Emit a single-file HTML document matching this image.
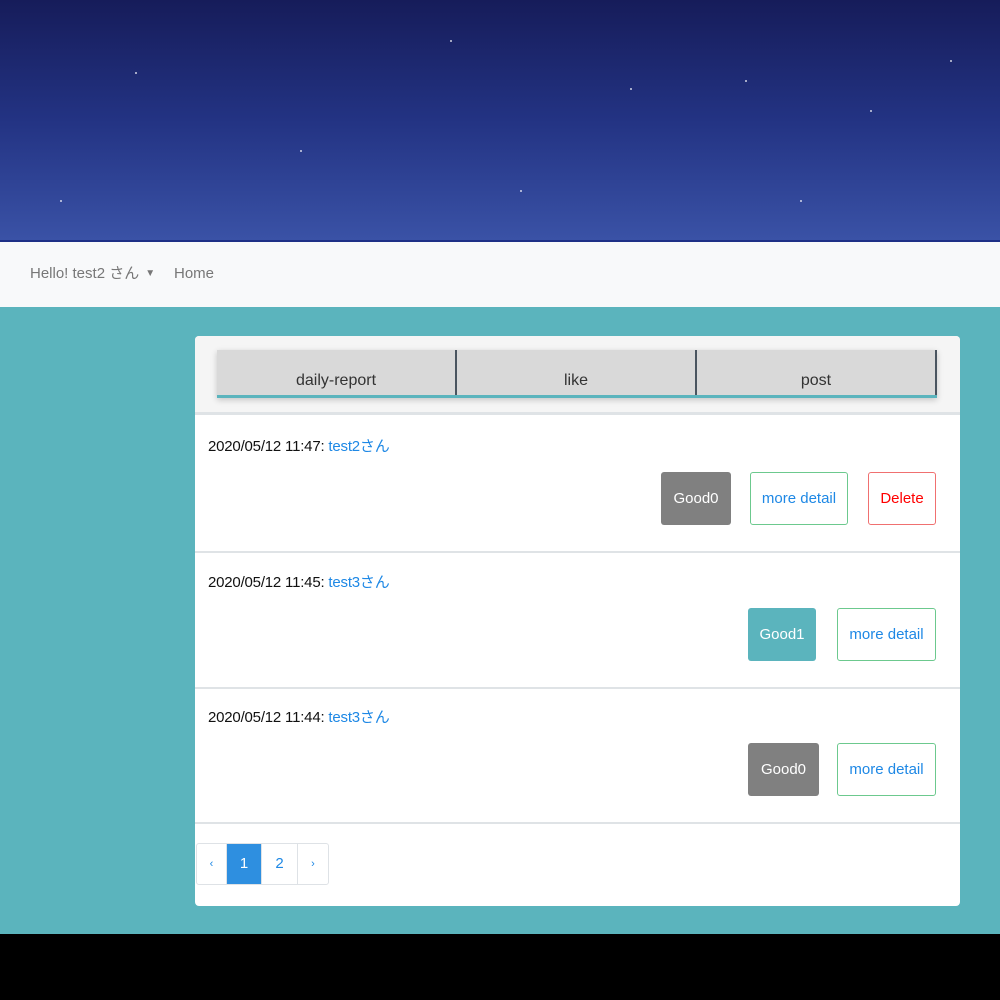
<!DOCTYPE html><html><head><meta charset="utf-8"><style>
*{box-sizing:border-box;margin:0;padding:0}
body{width:1000px;height:1000px;position:relative;background:#000;font-family:"Liberation Sans","Noto Sans CJK JP",sans-serif;overflow:hidden}
.hd{position:absolute;left:0;top:0;width:1000px;height:242px;background:linear-gradient(180deg,#161c5a 0%,#233383 50%,#3a52a6 100%);border-bottom:2px solid #1e2f86}
.nav{position:absolute;top:242px;left:0;width:1000px;height:65px;background:#f8f9fa;color:#777;font-size:15px}
.nav .i{position:absolute;top:23px;line-height:18px}
.nav .c{font-size:10px;margin-left:6px;vertical-align:2px}
.main{position:absolute;top:307px;left:0;width:1000px;height:627px;background:#5bb4bd}
.card{position:absolute;left:195px;top:336px;width:765px;height:570px;background:#fff;border-radius:4px;overflow:hidden}
.tabw{position:absolute;left:0;top:0;width:765px;height:79px;background:#f5f5f5;border-bottom:3px solid #dfe3e6}
.tabs{position:absolute;left:22px;top:14px;width:720px;height:48px;background:#d9d9d9;border-bottom:3px solid #5bb4bd;box-shadow:0 2px 6px rgba(0,0,0,.2);display:flex}
.tabs div{flex:1;text-align:center;padding-top:22px;font-size:16px;color:#333;border-right:2px solid #4a5560}
.row{position:absolute;left:0;width:765px;height:136px;border-bottom:2px solid #dfe3e6}
.t{position:absolute;left:13px;top:18px;font-size:15px;color:#111;letter-spacing:-.2px}
.t a{color:#1e88e5;text-decoration:none}
.b{position:absolute;top:55px;height:53px;border-radius:3px;font-size:15px;text-align:center;line-height:53px}
.g{background:#808080;color:#fff}.gt{background:#5bb4bd;color:#fff}
.md{border:1px solid #6cc98e;color:#1e88e5;background:#fff;line-height:51px}
.dl{border:1px solid #f07070;color:#f00;background:#fff;line-height:51px}
.pg{position:absolute;left:1px;top:507px;display:flex;height:42px;border:1px solid #dee2e6;border-radius:3px;overflow:hidden}
.pg div{width:30px;text-align:center;line-height:40px;color:#1e88e5;font-size:15px;border-right:1px solid #dee2e6}
.pg .a{background:#2e8fe0;color:#fff;width:35px}
.st{position:absolute;width:2px;height:2px;background:#fff;opacity:.6}
</style></head><body>
<div class="hd">
<div class="st" style="left:135px;top:72px"></div><div class="st" style="left:630px;top:88px"></div><div class="st" style="left:745px;top:80px"></div><div class="st" style="left:870px;top:110px"></div><div class="st" style="left:300px;top:150px"></div><div class="st" style="left:450px;top:40px"></div><div class="st" style="left:520px;top:190px"></div><div class="st" style="left:60px;top:200px"></div><div class="st" style="left:950px;top:60px"></div><div class="st" style="left:800px;top:200px"></div>
</div>
<div class="nav"><span class="i" style="left:30px">Hello! test2 さん<span class="c">▼</span></span><span class="i" style="left:174px">Home</span></div>
<div class="main"></div>
<div class="card">
<div class="tabw"><div class="tabs"><div>daily-report</div><div>like</div><div>post</div></div></div>
<div class="row" style="top:81px"><div class="t">2020/05/12 11:47: <a>test2さん</a></div>
<div class="b g" style="left:466px;width:70px">Good0</div><div class="b md" style="left:555px;width:98px">more detail</div><div class="b dl" style="left:673px;width:68px">Delete</div></div>
<div class="row" style="top:217px"><div class="t">2020/05/12 11:45: <a>test3さん</a></div>
<div class="b gt" style="left:553px;width:68px">Good1</div><div class="b md" style="left:642px;width:99px">more detail</div></div>
<div class="row" style="top:352px"><div class="t">2020/05/12 11:44: <a>test3さん</a></div>
<div class="b g" style="left:553px;width:71px">Good0</div><div class="b md" style="left:642px;width:99px">more detail</div></div>
<div class="pg"><div style="font-size:11px">‹</div><div class="a">1</div><div style="width:36px">2</div><div style="border-right:none;font-size:11px">›</div></div>
</div>
</body></html>
